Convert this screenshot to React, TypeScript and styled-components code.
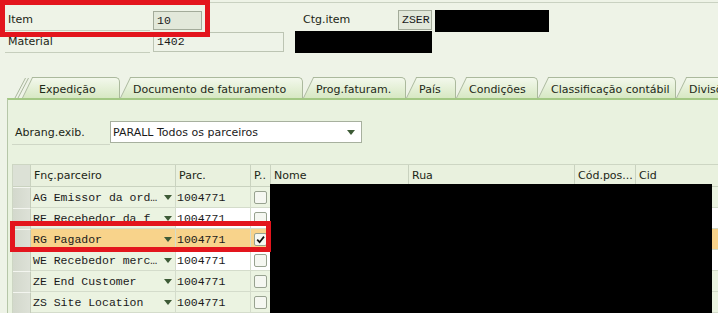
import React from "react";
import styled, { createGlobalStyle } from "styled-components";

const GlobalStyle = createGlobalStyle`
  html, body { margin: 0; padding: 0; background: #eef3e7; }
  body {
    font-family: "DejaVu Sans", Verdana, sans-serif;
    font-size: 11px;
    color: #1c2616;
  }
`;

const Screen = styled.div`
  position: relative;
  width: 718px;
  height: 313px;
  overflow: hidden;
  background: #eef3e7;
`;

const TopRule = styled.div`
  margin-top: 2px;
  border-top: 1px solid #c9d1c1;
`;

const FieldBlock = styled.div`
  padding-top: 6px;
  display: flex;
  flex-direction: column;
`;

const FieldRow = styled.div`
  display: flex;
  align-items: center;
  height: 22px;
`;

const FieldLabel = styled.div<{ $w: number; $lined?: boolean; $ml?: number }>`
  box-sizing: border-box;
  width: ${(p) => p.$w}px;
  margin-left: ${(p) => p.$ml ?? 5}px;
  padding-left: 3px;
  height: 22px;
  line-height: 22px;
  white-space: nowrap;
  border-bottom: 1px solid ${(p) => (p.$lined ? "#c6cebd" : "transparent")};
`;

const ValueBox = styled.div<{ $w: number; $h: number; $tone: "grey" | "light" }>`
  box-sizing: border-box;
  width: ${(p) => p.$w}px;
  height: ${(p) => p.$h}px;
  margin-left: 3px;
  padding-left: 3px;
  line-height: ${(p) => p.$h - 2}px;
  font-family: "Liberation Mono", "DejaVu Sans Mono", monospace;
  font-size: 11.5px;
  color: #1a1a1a;
  background: ${(p) => (p.$tone === "grey" ? "#e2e8da" : "#eef3e8")};
  border: 1px solid ${(p) => (p.$tone === "grey" ? "#a3ab9a" : "#bcc4b3")};
`;

const TabStrip = styled.div`
  display: flex;
  height: 21px;
  margin-top: 24px;
  padding-left: 12px;
  white-space: nowrap;
`;

const StackEdge = styled.svg`
  flex: 0 0 10px;
  overflow: visible;
`;

const Tab = styled.div<{ $w: number }>`
  position: relative;
  flex: 0 0 ${(p) => p.$w}px;
  height: 21px;
  &::before {
    content: "";
    position: absolute;
    left: 0;
    top: 0;
    bottom: 0;
    width: 22px;
    background: linear-gradient(#f3f8ec, #d7e8c3);
    border-left: 1px solid #abb99d;
    border-top: 1px solid #abb99d;
    transform: skewX(-26deg);
    transform-origin: bottom left;
  }
  &::after {
    content: "";
    position: absolute;
    left: 12px;
    right: 0;
    top: 0;
    bottom: 0;
    background: linear-gradient(#f3f8ec, #d7e8c3);
    border-top: 1px solid #abb99d;
    border-right: 1px solid #abb99d;
    border-top-right-radius: 5px;
  }
`;

const TabText = styled.span<{ $pl: number }>`
  position: relative;
  z-index: 1;
  display: block;
  padding-left: ${(p) => p.$pl}px;
  line-height: 25px;
  color: #1e2918;
`;

const Panel = styled.div`
  margin-left: 7px;
  border-top: 2px solid #a3c884;
  border-left: 1px solid #b6c6a8;
  background: #e9f2df;
  padding: 21px 0 0 4px;
  height: 300px;
`;

const DropRow = styled.div`
  display: flex;
  align-items: center;
  height: 22px;
`;

const DropLabel = styled.div`
  box-sizing: border-box;
  width: 98px;
  height: 24px;
  line-height: 23px;
  padding-left: 3px;
  border-bottom: 1px solid #cfd7c6;
  align-self: flex-start;
`;

const Select = styled.div`
  box-sizing: border-box;
  width: 252px;
  height: 22px;
  background: #ffffff;
  border: 1px solid #a7b09e;
  display: flex;
  align-items: center;
  justify-content: space-between;
  padding: 0 6px 0 2px;
  color: #1a1a1a;
`;

const Arrow = styled.span`
  width: 0;
  height: 0;
  border-left: 4px solid transparent;
  border-right: 4px solid transparent;
  border-top: 5px solid #3d5a36;
`;

const Table = styled.div`
  margin-top: 21px;
  display: grid;
  grid-template-columns: 18px 145px 75px 20px 138px 166px 61px 120px;
  grid-template-rows: 22px;
  grid-auto-rows: 21px;
  border-top: 1px solid #cdd6c3;
  border-left: 1px solid #cdd6c3;
`;

const HeadCell = styled.div<{ $sel?: boolean }>`
  box-sizing: border-box;
  padding-left: ${(p) => (p.$sel ? 0 : 3)}px;
  line-height: 22px;
  white-space: nowrap;
  overflow: hidden;
  background: ${(p) => (p.$sel ? "#dce1d6" : "#e9f1de")};
  border-right: 1px solid #c9d2bf;
  border-bottom: 1px solid #c9d2bf;
`;

const SelCell = styled.div`
  box-sizing: border-box;
  background: linear-gradient(90deg, #d3d8cc, #dde1d7);
  border-top: 1px solid #f3f5ef;
  border-right: 1px solid #c4ccba;
`;

type Tone = "green" | "white" | "sel";
const toneBg = (t: Tone) =>
  t === "sel" ? "#f8d38b" : t === "white" ? "#ffffff" : "#ebf3e1";

const Cell = styled.div<{ $tone: Tone }>`
  box-sizing: border-box;
  display: flex;
  align-items: center;
  background: ${(p) => toneBg(p.$tone)};
  border-right: 1px solid #d4dccb;
  border-bottom: 1px solid #d4dccb;
  white-space: nowrap;
  overflow: hidden;
`;

const FuncCell = styled(Cell)`
  justify-content: space-between;
  padding: 0 3px 0 2px;
  font-family: "Liberation Mono", "DejaVu Sans Mono", monospace;
  font-size: 11.5px;
  color: #1a1a1a;
`;

const ParcCell = styled(Cell)`
  padding-left: 1px;
  font-family: "Liberation Mono", "DejaVu Sans Mono", monospace;
  font-size: 11.5px;
  color: #1a1a1a;
`;

const BoxCell = styled(Cell)`
  justify-content: center;
`;

const Check = styled.span`
  box-sizing: border-box;
  width: 13px;
  height: 13px;
  border: 1px solid #98a290;
  border-radius: 2px;
  background: #f5f7f1;
  display: flex;
  align-items: center;
  justify-content: center;
`;

const Mark = styled.div<{ $x: number; $y: number; $w: number; $h: number }>`
  position: absolute;
  left: ${(p) => p.$x}px;
  top: ${(p) => p.$y}px;
  width: ${(p) => p.$w}px;
  height: ${(p) => p.$h}px;
  box-sizing: border-box;
  border: 5px solid #e3151d;
  pointer-events: none;
`;

const Redact = styled.div<{ $x: number; $y: number; $w: number; $h: number }>`
  position: absolute;
  left: ${(p) => p.$x}px;
  top: ${(p) => p.$y}px;
  width: ${(p) => p.$w}px;
  height: ${(p) => p.$h}px;
  background: #000;
`;

const tabs = [
  { label: "Expedição", w: 98, pl: 17 },
  { label: "Documento de faturamento", w: 183, pl: 13 },
  { label: "Prog.faturam.", w: 103, pl: 13 },
  { label: "País", w: 50, pl: 13 },
  { label: "Condições", w: 82, pl: 13 },
  { label: "Classificação contábil", w: 138, pl: 13 },
  { label: "Divisões", w: 110, pl: 13 },
];

const rows: { func: string; tone: Tone; parcTone: Tone; checked?: boolean }[] = [
  { func: "AG Emissor da ord…", tone: "green", parcTone: "green" },
  { func: "RE Recebedor da f", tone: "green", parcTone: "white" },
  { func: "RG Pagador", tone: "sel", parcTone: "sel", checked: true },
  { func: "WE Recebedor merc…", tone: "green", parcTone: "white" },
  { func: "ZE End Customer", tone: "green", parcTone: "green" },
  { func: "ZS Site Location", tone: "green", parcTone: "green" },
];

const headers = ["Fnç.parceiro", "Parc.", "P..", "Nome", "Rua", "Cód.pos...", "Cid"];

export default function App() {
  return (
    <>
      <GlobalStyle />
      <Screen>
        <TopRule />
        <FieldBlock>
          <FieldRow>
            <FieldLabel $w={145} $lined>Item</FieldLabel>
            <ValueBox $w={49} $h={19} $tone="grey">10</ValueBox>
            <FieldLabel $w={95} $ml={98}>Ctg.item</FieldLabel>
            <ValueBox $w={34} $h={20} $tone="grey">ZSER</ValueBox>
          </FieldRow>
          <FieldRow>
            <FieldLabel $w={145} $lined>Material</FieldLabel>
            <ValueBox $w={131} $h={20} $tone="light">1402</ValueBox>
          </FieldRow>
        </FieldBlock>

        <TabStrip>
          <StackEdge width="10" height="21" viewBox="0 0 10 21">
            <path d="M3 21 L13.5 1 M6 21 L16.5 1" stroke="#aab79d" strokeWidth="1" fill="none" />
          </StackEdge>
          {tabs.map((t) => (
            <Tab key={t.label} $w={t.w}>
              <TabText $pl={t.pl}>{t.label}</TabText>
            </Tab>
          ))}
        </TabStrip>

        <Panel>
          <DropRow>
            <DropLabel>Abrang.exib.</DropLabel>
            <Select>
              <span>PARALL Todos os parceiros</span>
              <Arrow />
            </Select>
          </DropRow>

          <Table>
            <HeadCell $sel />
            {headers.map((h) => (
              <HeadCell key={h}>{h}</HeadCell>
            ))}
            {rows.map((r) => (
              <React.Fragment key={r.func}>
                <SelCell />
                <FuncCell $tone={r.tone}>
                  <span>{r.func}</span>
                  <Arrow />
                </FuncCell>
                <ParcCell $tone={r.parcTone}>1004771</ParcCell>
                <BoxCell $tone={r.parcTone}>
                  <Check>
                    {r.checked && (
                      <svg width="9" height="9" viewBox="0 0 9 9">
                        <path d="M1.2 4.6 L3.6 7.2 L8 1.6" stroke="#111" strokeWidth="1.7" fill="none" />
                      </svg>
                    )}
                  </Check>
                </BoxCell>
                <Cell $tone={r.parcTone} />
                <Cell $tone={r.parcTone} />
                <Cell $tone={r.parcTone} />
                <Cell $tone={r.parcTone} />
              </React.Fragment>
            ))}
          </Table>
        </Panel>

        <Redact $x={435} $y={10} $w={114} $h={22} />
        <Redact $x={295} $y={31} $w={137} $h={22} />
        <Redact $x={270} $y={184} $w={442} $h={129} />
        <Mark $x={0} $y={0} $w={210} $h={37} />
        <Mark $x={10} $y={221} $w={261} $h={31} />
      </Screen>
    </>
  );
}
